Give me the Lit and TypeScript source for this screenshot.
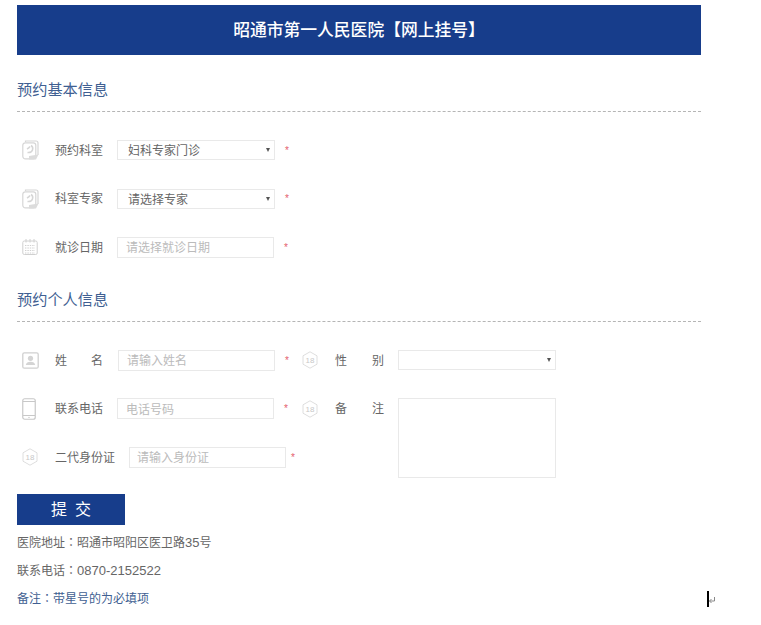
import { LitElement, html, css, svg } from "lit";
import { customElement } from "lit/decorators.js";

const docIcon = svg`<svg class="icon" width="17" height="20" viewBox="0 0 17 20" fill="none" stroke="#d6d6d6" stroke-width="1.2">
    <path d="M3.5 2 V1 H14 Q16 1 16 3 V15" />
    <rect x="0.8" y="2.8" width="13" height="16" rx="2.5" />
    <path d="M9 5.5 Q11.5 7 10.5 10 Q9.5 13 5.5 12.5 M5 9 Q7 8 8 6.5" stroke-width="1.5" />
    <path d="M7 16 L16.5 14.5 L14 19.5 H7 Z" fill="#dcdcdc" stroke="none" />
</svg>`;

const calendarIcon = svg`<svg class="icon" width="16" height="16" viewBox="0 0 16 16" fill="none" stroke="#d0d0d0">
    <rect x="0.8" y="2" width="14.4" height="13.5" rx="1.5" />
    <path d="M4 0 V3.5 M8 0 V3.5 M12 0 V3.5" />
    <path d="M3 6.5 H13 M3 9 H13 M3 11.5 H13 M3 14 H13" stroke-width="1" stroke-dasharray="1.4 1" />
</svg>`;

const personIcon = svg`<svg class="icon" width="17" height="17" viewBox="0 0 17 17" fill="none" stroke="#d0d0d0">
    <rect x="0.8" y="0.8" width="15.4" height="15.4" rx="1.5" stroke-width="1.3" />
    <circle cx="8.5" cy="6.3" r="2.6" fill="#d4d4d4" stroke="none" />
    <path d="M3.8 13 Q4.5 9.8 8.5 9.8 Q12.5 9.8 13.2 13 Z" fill="#d4d4d4" stroke="none" />
</svg>`;

const phoneIcon = svg`<svg class="icon" width="14" height="22" viewBox="0 0 14 22" fill="none" stroke="#c8c8c8">
    <rect x="0.75" y="0.75" width="12.5" height="20.5" rx="2" stroke-width="1.2" />
    <path d="M1 3.5 H13 M1 17.5 H13" />
    <circle cx="7" cy="19.4" r="0.7" fill="#c8c8c8" stroke="none" />
</svg>`;

const hexIcon = html`<svg class="icon" width="16" height="18" viewBox="0 0 16 18" fill="none">
    <path d="M8 0.8 L15 4.8 V13.2 L8 17.2 L1 13.2 V4.8 Z" stroke="#dedede" stroke-width="1" />
    <text x="8" y="11.7" text-anchor="middle" font-size="8" fill="#c8c8c8" font-family="Liberation Sans, sans-serif">18</text>
</svg>`;

@customElement("app-root")
export class AppRoot extends LitElement {
    static styles = css`
        :host {
            display: block;
            position: relative;
            height: 625px;
            box-sizing: border-box;
            padding: 5px 0 0 17px;
            background: #fff;
            color: #666;
            font-family: "Liberation Sans", "Noto Sans CJK SC", sans-serif;
            font-size: 12px;
            overflow: hidden;
        }

        .wrap {
            width: 684px;
        }

        .title {
            height: 50px;
            line-height: 52px;
            background: #173d8b;
            color: #fff;
            text-align: center;
            font-size: 16.8px;
            font-weight: 500;
        }

        .section {
            box-sizing: border-box;
            height: 33px;
            margin: 24px 0 0;
            border-bottom: 1px dashed #b5b5b5;
            color: #3f5f92;
            font-size: 15.2px;
            font-weight: 400;
            line-height: 22px;
        }

        .fields {
            display: flex;
            flex-direction: column;
            gap: 27.5px;
            padding-top: 27.5px;
        }

        .fields + .section {
            margin-top: 31.5px;
        }

        .personal {
            display: flex;
            padding-top: 27.5px;
        }

        .personal .fields {
            padding-top: 0;
            width: 285px;
        }

        .side {
            display: flex;
            flex-direction: column;
            gap: 27.5px;
        }

        .row {
            display: flex;
            align-items: center;
            height: 21px;
        }

        .row.top {
            align-items: flex-start;
            height: auto;
        }

        .icon-box {
            flex: none;
            width: 38px;
            display: flex;
            align-items: center;
            padding-left: 5px;
            box-sizing: border-box;
            height: 21px;
        }

        .label {
            flex: none;
            display: flex;
            justify-content: space-between;
            min-width: 48px;
            height: 21px;
            margin-right: 14px;
            line-height: 23px;
            color: #666;
        }

        .label.pair {
            margin-right: 15px;
        }

        .side .icon-box {
            width: 33px;
            padding-left: 0;
        }

        .side .label {
            min-width: 49px;
            margin-right: 14px;
        }

        .control {
            flex: none;
            box-sizing: border-box;
            width: 157px;
            height: 21px;
            border: 1px solid #e9e9e9;
            background: #fff;
            color: #666;
            font: inherit;
            outline: none;
        }

        input.control {
            padding: 2px 8px 0;
        }

        input.control::placeholder {
            color: #bbb;
            opacity: 1;
        }

        .select {
            position: relative;
            flex: none;
            width: 158px;
            height: 20px;
        }

        .select select {
            appearance: none;
            width: 100%;
            height: 100%;
            padding: 2px 0 0 10px;
        }

        .select::after {
            content: "";
            position: absolute;
            right: 5px;
            top: 8px;
            border: 2.5px solid transparent;
            border-top: 4px solid #555;
            border-bottom: 0;
        }

        textarea.control {
            display: block;
            width: 158px;
            height: 80px;
            resize: none;
        }

        .star {
            margin-left: 10px;
            color: #e4606d;
            font-size: 10px;
        }

        .tight .star {
            margin-left: 5px;
        }

        .tight input.control {
            padding-left: 7px;
        }

        .submit {
            display: block;
            width: 108px;
            height: 31px;
            margin-top: 16px;
            padding: 0 0 3px;
            border: 0;
            background: #173d8b;
            color: #fff;
            font: inherit;
            font-size: 16px;
            letter-spacing: 8px;
            text-indent: 8px;
        }

        .foot {
            height: 28px;
            margin: 0;
            line-height: 28px;
        }

        .foot:first-of-type {
            margin-top: 4px;
        }

        .colon {
            font-family: "Noto Sans CJK TC", sans-serif;
            line-height: 1;
        }

        .num {
            font-size: 13px;
            line-height: 1;
        }

        .note {
            color: #3f5f92;
        }

        .caret {
            position: absolute;
            left: 707px;
            top: 591px;
            width: 2px;
            height: 16px;
            background: #000;
        }

        .caret-mark {
            position: absolute;
            left: 708px;
            top: 596px;
        }
    `;

    private field(icon: unknown, label: string, control: unknown, tight = false) {
        const pair = label.length == 2;
        const text = pair
            ? html`<span>${label[0]}</span><span>${label[1]}</span>`
            : html`<span>${label}</span>`;
        return html`<div class="row ${tight ? "tight" : ""}">
            <div class="icon-box">${icon}</div>
            <div class="label ${pair ? "pair" : ""}">${text}</div>
            ${control}
            <span class="star">*</span>
        </div>`;
    }

    private select(value: string) {
        return html`<div class="select">
            <select class="control"><option>${value}</option></select>
        </div>`;
    }

    private input(placeholder: string) {
        return html`<input class="control" placeholder=${placeholder} />`;
    }

    render() {
        return html`<div class="wrap">
                <div class="title">昭通市第一人民医院【网上挂号】</div>

                <h2 class="section">预约基本信息</h2>
                <div class="fields">
                    ${this.field(docIcon, "预约科室", this.select("妇科专家门诊"))}
                    ${this.field(docIcon, "科室专家", this.select("请选择专家"))}
                    ${this.field(calendarIcon, "就诊日期", this.input("请选择就诊日期"))}
                </div>

                <h2 class="section">预约个人信息</h2>
                <div class="personal">
                    <div class="fields">
                        ${this.field(personIcon, "姓名", this.input("请输入姓名"))}
                        ${this.field(phoneIcon, "联系电话", this.input("电话号码"))}
                        ${this.field(hexIcon, "二代身份证", this.input("请输入身份证"), true)}
                    </div>
                    <div class="side">
                        <div class="row">
                            <div class="icon-box">${hexIcon}</div>
                            <div class="label"><span>性</span><span>别</span></div>
                            ${this.select("")}
                        </div>
                        <div class="row top">
                            <div class="icon-box">${hexIcon}</div>
                            <div class="label"><span>备</span><span>注</span></div>
                            <textarea class="control"></textarea>
                        </div>
                    </div>
                </div>

                <button class="submit">提交</button>
                <p class="foot">医院地址<span class="colon">：</span>昭通市昭阳区医卫路<span class="num">35</span>号</p>
                <p class="foot">联系电话<span class="colon">：</span><span class="num">0870-2152522</span></p>
                <p class="foot note">备注<span class="colon">：</span>带星号的为必填项</p>
            </div>
            <div class="caret"></div>
            <svg class="caret-mark" width="8" height="10" viewBox="0 0 8 10" fill="none" stroke="#888">
                <path d="M6.5 1 V5 H1.5 M3.5 3 L1.5 5 L3.5 7" />
            </svg>`;
    }
}
